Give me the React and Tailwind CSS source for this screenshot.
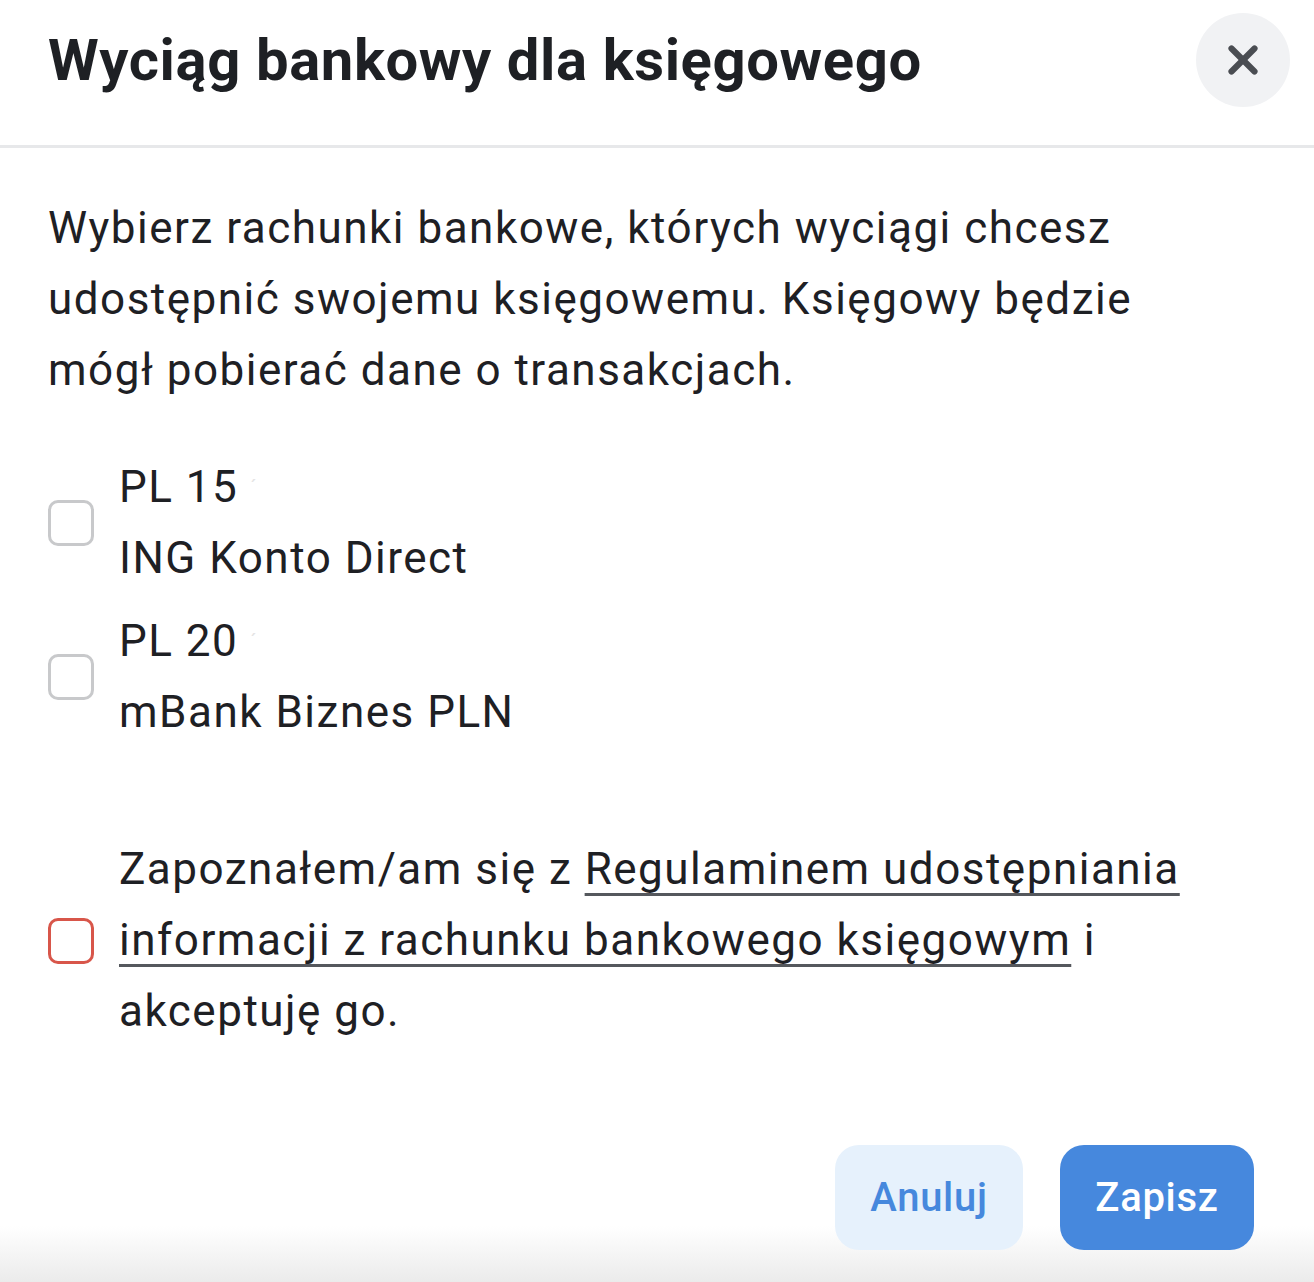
import { X } from 'lucide-react'

const accounts = [
  { id: 'ing', number: 'PL 15', name: 'ING Konto Direct' },
  { id: 'mbank', number: 'PL 20', name: 'mBank Biznes PLN' },
]

function Checkbox({ error }) {
  return (
    <span
      className={
        'block w-[46px] h-[46px] shrink-0 rounded-[10px] border-[3px] bg-white ' +
        (error ? 'border-[#d8564a]' : 'border-[#c8c9cb]')
      }
    />
  )
}

export default function App() {
  return (
    <div className="relative h-[1282px] overflow-hidden bg-white font-['Roboto',sans-serif] text-[#1e2024]">
      <div className="pointer-events-none absolute bottom-0 left-0 right-0 h-[56px] bg-linear-to-b from-transparent to-[#ebebeb]" />

      <div className="relative flex items-center justify-between pl-12 pr-6 pt-[13px] pb-[38px] border-b-[3px] border-[#e7e8ea]">
        <h1 className="text-[58px] leading-[70px] font-bold tracking-[0.6px]">Wyciąg bankowy dla księgowego</h1>
        <button
          type="button"
          className="w-[94px] h-[94px] rounded-full bg-[#f1f2f4] flex items-center justify-center text-[#4a4d52]"
        >
          <X size={46} strokeWidth={3.2} />
        </button>
      </div>

      <div className="relative px-12 pt-[45px] tracking-[1.5px]">
        <p className="max-w-[1150px] text-[44px] leading-[71px]">
          Wybierz rachunki bankowe, których wyciągi chcesz udostępnić swojemu księgowemu. Księgowy będzie
          mógł pobierać dane o transakcjach.
        </p>

        <div className="mt-[46px] flex flex-col gap-[12px]">
          {accounts.map((a) => (
            <label key={a.id} className="flex items-center gap-[25px]">
              <Checkbox />
              <div className="text-[44px] leading-[71px]">
                <p>
                  {a.number}
                  <span className="ml-3 text-[#e4e4e4] text-[20px] align-top">´</span>
                </p>
                <p>{a.name}</p>
              </div>
            </label>
          ))}
        </div>

        <label className="mt-[86px] flex items-center gap-[25px]">
          <Checkbox error />
          <p className="text-[44px] leading-[71px]">
            Zapoznałem/am się z{' '}
            <span className="underline decoration-[3px] underline-offset-[9px] decoration-[#55585d]">
              Regulaminem udostępniania informacji z rachunku bankowego księgowym
            </span>{' '}
            i akceptuję go.
          </p>
        </label>

        <div className="mt-[98px] flex justify-end gap-[37px] pr-3 tracking-[0.7px]">
          <button
            type="button"
            className="w-[188px] h-[105px] rounded-[24px] bg-[#e6f1fc] text-[#4688dd] text-[40px] font-medium"
          >
            Anuluj
          </button>
          <button
            type="button"
            className="w-[194px] h-[105px] rounded-[24px] bg-[#4688dd] text-white text-[40px] font-medium"
          >
            Zapisz
          </button>
        </div>
      </div>
    </div>
  )
}
